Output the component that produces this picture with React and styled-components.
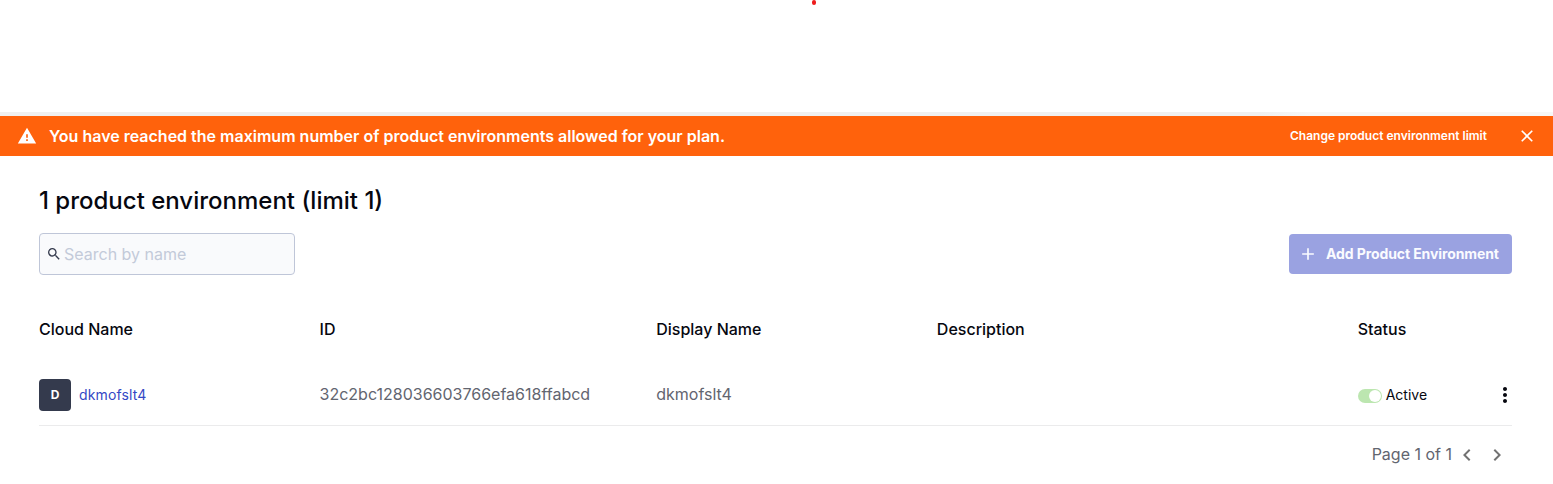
import React from "react";
import styled, { createGlobalStyle } from "styled-components";

const Global = createGlobalStyle`
  *, *::before, *::after { box-sizing: border-box; }
  body { margin: 0; background: #fff; font-family: Inter, sans-serif; color: #06070f; }
  button { font: inherit; color: inherit; border: 0; background: none; padding: 0; display: flex; }
`;
const Page = styled.div`
  height: 484px;
  overflow: hidden;
  display: flex;
  flex-direction: column;
`;
const Top = styled.header`
  height: 112px;
  display: flex;
  justify-content: center;
  align-items: flex-start;
`;
const Dot = styled.span`
  width: 4px;
  height: 5px;
  border-radius: 2px;
  background: #ee1c1c;
  margin-left: 75px;
`;
const Strip = styled.div`
  height: 4px;
  background: linear-gradient(to right, #f0f0f0 1260px, #f7f7f7 1310px);
`;
const Banner = styled.div`
  height: 40px;
  background: #ff620c;
  color: #fff;
  display: flex;
  align-items: center;
  padding: 0 16px 0 17px;
`;
const BannerText = styled.span`
  flex: 1;
  margin-left: 12px;
  font-size: 16px;
  font-weight: 600;
  line-height: 24px;
`;
const BannerAction = styled.button`
  && { font-size: 12px; font-weight: 600; }
  margin: 0 30px 2px 0;
`;
const Icon = styled.svg`
  width: ${(p) => p.$size || 20}px;
  height: ${(p) => p.$size || 20}px;
  fill: currentColor;
  flex: none;
  display: block;
`;
const Content = styled.main`
  padding: 29px 41px 0 39px;
`;
const Title = styled.h1`
  margin: 0;
  font-size: 24px;
  font-weight: 500;
  line-height: 32px;
`;
const Toolbar = styled.div`
  margin-top: 16px;
  display: flex;
  justify-content: space-between;
  align-items: center;
`;
const SearchBox = styled.label`
  width: 256px;
  height: 42px;
  border: 1px solid #bfc6d8;
  border-radius: 4px;
  background: #f9fafc;
  display: flex;
  align-items: center;
  padding-left: 6px;
  gap: 2px;
  color: #343a4d;
`;
const SearchInput = styled.input`
  border: 0;
  outline: 0;
  padding: 0;
  flex: 1;
  min-width: 0;
  background: none;
  font: 400 16px/24px Inter, sans-serif;
  &::placeholder { color: #c3cad9; opacity: 1; }
`;
const AddButton = styled.button`
  && {
    width: 223px;
    height: 40px;
    padding-left: 9px;
    align-items: center;
    gap: 8px;
    font-size: 14px;
    font-weight: 700;
    letter-spacing: -0.1px;
    background: #9aa2e1;
    color: #fafbff;
  }
  border-radius: 4px;
`;
const AddLabel = styled.span`
  margin-bottom: 2px;
`;
const Table = styled.section`
  margin-top: 25px;
`;
const Row = styled.div`
  display: grid;
  grid-template-columns: 10fr 12fr 10fr 15fr 5.5fr;
  align-items: center;
`;
const HeadRow = styled(Row)`
  height: 58px;
`;
const BodyRow = styled(Row)`
  height: 68px;
  padding-top: 7px;
  border-bottom: 1px solid #ebebec;
`;
const HeadCell = styled.div`
  font-size: 16px;
  font-weight: 500;
  line-height: 24px;
`;
const Cell = styled.div`
  margin-bottom: 2px;
  font-size: 16px;
  line-height: 24px;
  color: #62656f;
`;
const NameCell = styled.div`
  display: flex;
  align-items: center;
  gap: 8px;
`;
const Avatar = styled.span`
  width: 32px;
  height: 32px;
  padding-bottom: 1px;
  border-radius: 4px;
  background: #343a4d;
  color: #fff;
  font-size: 12px;
  font-weight: 700;
  display: flex;
  align-items: center;
  justify-content: center;
`;
const NameLink = styled.a`
  font-size: 14px;
  line-height: 20px;
  letter-spacing: 0.15px;
  color: #3448c5;
`;
const StatusCell = styled.div`
  display: flex;
  align-items: center;
`;
const Toggle = styled.span`
  width: 24px;
  height: 14px;
  margin-top: 2px;
  border-radius: 7px;
  background: #bce6b0;
  padding: 1px;
  display: flex;
  justify-content: flex-end;
`;
const Knob = styled.span`
  width: 12px;
  height: 12px;
  border-radius: 50%;
  background: #fff;
`;
const StatusText = styled.span`
  flex: 1;
  margin-left: 4px;
  font-size: 14px;
  line-height: 20px;
`;
const MenuButton = styled.button`
  margin-right: -5px;
`;
const Pager = styled.div`
  display: flex;
  align-items: center;
  justify-content: flex-end;
  height: 58px;
  font-size: 16px;
  color: #62656f;
  padding-right: 3.5px;
`;
const PageLabel = styled.span`
  margin-bottom: 2px;
`;
const PageButton = styled.button`
  && { color: #727272; }
  margin-left: ${(p) => p.$gap}px;
`;

const paths = {
  warning: "M1 21h22L12 2 1 21zm12-3h-2v-2h2v2zm0-4h-2v-4h2v4z",
  close: "M19 6.41 17.59 5 12 10.59 6.41 5 5 6.41 10.59 12 5 17.59 6.41 19 12 13.41 17.59 19 19 17.59 13.41 12z",
  search: "M15.5 14h-.79l-.28-.27A6.471 6.471 0 0 0 16 9.5 6.5 6.5 0 1 0 9.5 16c1.61 0 3.09-.59 4.23-1.57l.27.28v.79l5 4.99L20.49 19l-4.99-5zm-6 0C7.01 14 5 11.99 5 9.5S7.01 5 9.5 5 14 7.01 14 9.5 11.99 14 9.5 14z",
  add: "M19 13h-6v6h-2v-6H5v-2h6V5h2v6h6v2z",
  more: "M12 8c1.1 0 2-.9 2-2s-.9-2-2-2-2 .9-2 2 .9 2 2 2zm0 2c-1.1 0-2 .9-2 2s.9 2 2 2 2-.9 2-2-.9-2-2-2zm0 6c-1.1 0-2 .9-2 2s.9 2 2 2 2-.9 2-2-.9-2-2-2z",
  left: "M15.41 7.41 14 6l-6 6 6 6 1.41-1.41L10.83 12z",
  right: "M10 6 8.59 7.41 13.17 12l-4.58 4.59L10 18l6-6z",
};
const Glyph = ({ name, size }) => (
  <Icon $size={size} viewBox="0 0 24 24" aria-hidden="true">
    <path d={paths[name]} />
  </Icon>
);

const columns = ["Cloud Name", "ID", "Display Name", "Description", "Status"];

export default function App() {
  return (
    <Page>
      <Global />
      <Top><Dot /></Top>
      <Strip />
      <Banner>
        <Glyph name="warning" />
        <BannerText>You have reached the maximum number of product environments allowed for your plan.</BannerText>
        <BannerAction>Change product environment limit</BannerAction>
        <button aria-label="Close"><Glyph name="close" /></button>
      </Banner>
      <Content>
        <Title>1 product environment (limit 1)</Title>
        <Toolbar>
          <SearchBox>
            <Glyph name="search" size={16} />
            <SearchInput placeholder="Search by name" />
          </SearchBox>
          <AddButton><Glyph name="add" /><AddLabel>Add Product Environment</AddLabel></AddButton>
        </Toolbar>
        <Table>
          <HeadRow>
            {columns.map((c) => <HeadCell key={c}>{c}</HeadCell>)}
          </HeadRow>
          <BodyRow>
            <NameCell><Avatar>D</Avatar><NameLink>dkmofslt4</NameLink></NameCell>
            <Cell>32c2bc128036603766efa618ffabcd</Cell>
            <Cell>dkmofslt4</Cell>
            <Cell />
            <StatusCell>
              <Toggle><Knob /></Toggle>
              <StatusText>Active</StatusText>
              <MenuButton aria-label="More"><Glyph name="more" size={24} /></MenuButton>
            </StatusCell>
          </BodyRow>
        </Table>
        <Pager>
          <PageLabel>Page 1 of 1</PageLabel>
          <PageButton $gap={3} aria-label="Previous page"><Glyph name="left" size={24} /></PageButton>
          <PageButton $gap={5.5} aria-label="Next page"><Glyph name="right" size={24} /></PageButton>
        </Pager>
      </Content>
    </Page>
  );
}
